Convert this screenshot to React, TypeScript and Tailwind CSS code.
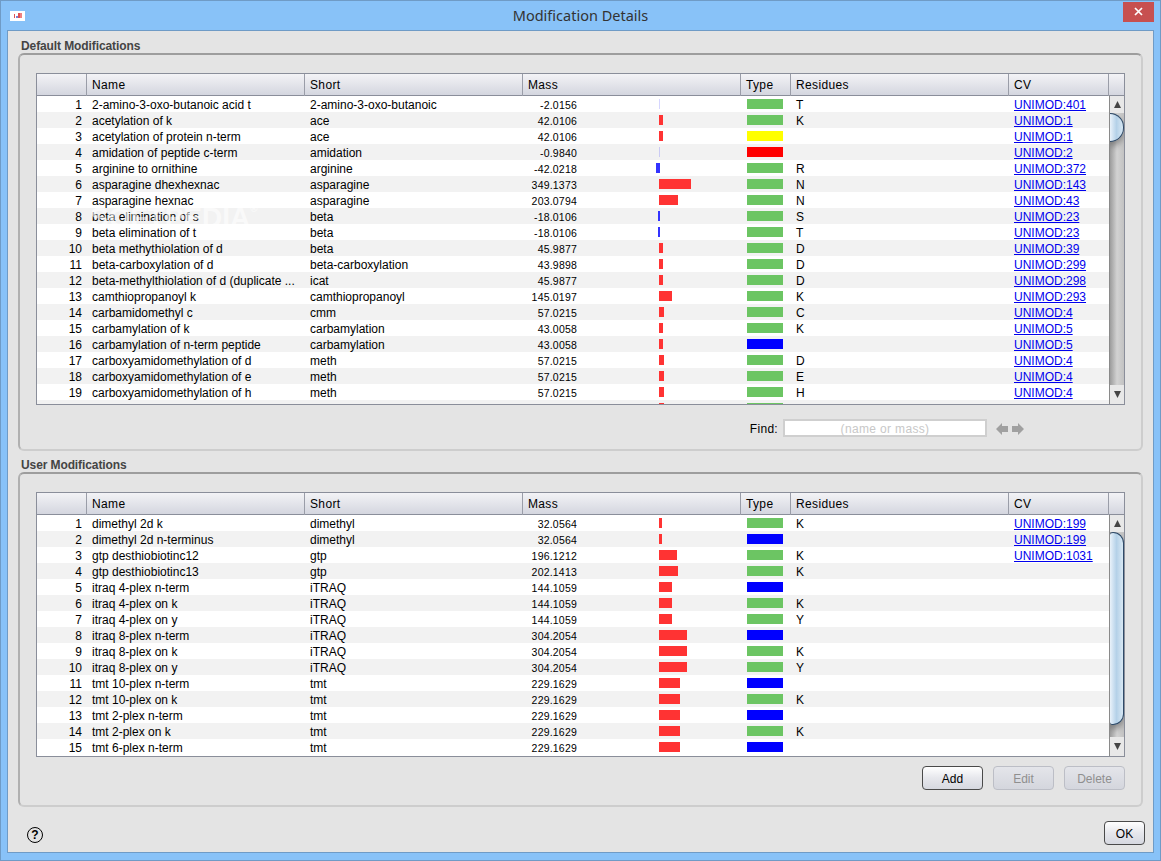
import React from "react";

type Mod = [string, string, number, string, string, string];

const G = "bg-[#6cc563]";
const Y = "bg-[#ffff00]";
const R = "bg-[#ff0000]";
const B = "bg-[#0000ff]";

const defaultMods: Mod[] = [
  ["2-amino-3-oxo-butanoic acid t", "2-amino-3-oxo-butanoic", -2.0156, G, "T", "UNIMOD:401"],
  ["acetylation of k", "ace", 42.0106, G, "K", "UNIMOD:1"],
  ["acetylation of protein n-term", "ace", 42.0106, Y, "", "UNIMOD:1"],
  ["amidation of peptide c-term", "amidation", -0.984, R, "", "UNIMOD:2"],
  ["arginine to ornithine", "arginine", -42.0218, G, "R", "UNIMOD:372"],
  ["asparagine dhexhexnac", "asparagine", 349.1373, G, "N", "UNIMOD:143"],
  ["asparagine hexnac", "asparagine", 203.0794, G, "N", "UNIMOD:43"],
  ["beta elimination of s", "beta", -18.0106, G, "S", "UNIMOD:23"],
  ["beta elimination of t", "beta", -18.0106, G, "T", "UNIMOD:23"],
  ["beta methythiolation of d", "beta", 45.9877, G, "D", "UNIMOD:39"],
  ["beta-carboxylation of d", "beta-carboxylation", 43.9898, G, "D", "UNIMOD:299"],
  ["beta-methylthiolation of d (duplicate ...", "icat", 45.9877, G, "D", "UNIMOD:298"],
  ["camthiopropanoyl k", "camthiopropanoyl", 145.0197, G, "K", "UNIMOD:293"],
  ["carbamidomethyl c", "cmm", 57.0215, G, "C", "UNIMOD:4"],
  ["carbamylation of k", "carbamylation", 43.0058, G, "K", "UNIMOD:5"],
  ["carbamylation of n-term peptide", "carbamylation", 43.0058, B, "", "UNIMOD:5"],
  ["carboxyamidomethylation of d", "meth", 57.0215, G, "D", "UNIMOD:4"],
  ["carboxyamidomethylation of e", "meth", 57.0215, G, "E", "UNIMOD:4"],
  ["carboxyamidomethylation of h", "meth", 57.0215, G, "H", "UNIMOD:4"],
  // only the top sliver of this row shows, so just its bars
  ["", "", 57.0215, G, "", ""],
];

const userMods: Mod[] = [
  ["dimethyl 2d k", "dimethyl", 32.0564, G, "K", "UNIMOD:199"],
  ["dimethyl 2d n-terminus", "dimethyl", 32.0564, B, "", "UNIMOD:199"],
  ["gtp desthiobiotinc12", "gtp", 196.1212, G, "K", "UNIMOD:1031"],
  ["gtp desthiobiotinc13", "gtp", 202.1413, G, "K", ""],
  ["itraq 4-plex n-term", "iTRAQ", 144.1059, B, "", ""],
  ["itraq 4-plex on k", "iTRAQ", 144.1059, G, "K", ""],
  ["itraq 4-plex on y", "iTRAQ", 144.1059, G, "Y", ""],
  ["itraq 8-plex n-term", "iTRAQ", 304.2054, B, "", ""],
  ["itraq 8-plex on k", "iTRAQ", 304.2054, G, "K", ""],
  ["itraq 8-plex on y", "iTRAQ", 304.2054, G, "Y", ""],
  ["tmt 10-plex n-term", "tmt", 229.1629, B, "", ""],
  ["tmt 10-plex on k", "tmt", 229.1629, G, "K", ""],
  ["tmt 2-plex n-term", "tmt", 229.1629, B, "", ""],
  ["tmt 2-plex on k", "tmt", 229.1629, G, "K", ""],
  ["tmt 6-plex n-term", "tmt", 229.1629, B, "", ""],
];

const columns = "grid grid-cols-[50px_218px_218px_218px_50px_218px_100px]";

function Header() {
  const cell = "border-r border-[#9a9da8] pl-[5px] tracking-[0.35px]";
  return (
    <div className="flex h-[22px] border-b border-[#8a8e9a] bg-gradient-to-b from-[#f3f3f6] to-[#d4d6df] text-[12px] leading-[23px] text-black">
      <div className={columns}>
        <div className={cell}></div>
        <div className={cell}>Name</div>
        <div className={cell}>Short</div>
        <div className={cell}>Mass</div>
        <div className={cell}>Type</div>
        <div className={cell}>Residues</div>
        <div className={cell}>CV</div>
      </div>
      <div className="flex-1"></div>
    </div>
  );
}

function MassBar({ mass }: { mass: number }) {
  const w = Math.abs(mass) * 0.0917;
  const style = { width: Math.max(w, 1), opacity: w < 1 ? 0.2 : 1 };
  return (
    <div className="flex h-4 items-start pt-[3px]">
      <div className="flex w-[82px] justify-end">
        {mass < 0 && <div className="mr-[-1px] h-[10px] bg-[#3333ff]" style={style} />}
      </div>
      {mass >= 0 && <div className="h-[10px] bg-[#ff3333]" style={style} />}
    </div>
  );
}

function Row({ mod, index }: { mod: Mod; index: number }) {
  const [name, short, mass, type, residue, cv] = mod;
  return (
    <div className={`${columns} h-4 text-[12px] leading-[18px] text-black ${index % 2 === 0 ? "bg-white" : "bg-[#f2f2f2]"}`}>
      <div className="pr-[5px] text-right">{name && index + 1}</div>
      <div className="pl-[5px] whitespace-nowrap">{name}</div>
      <div className="pl-[5px] whitespace-nowrap">{short}</div>
      <div className="flex">
        <div className="w-[54px] text-right text-[10.5px] tracking-[0.2px]">{name && mass.toFixed(4)}</div>
        <MassBar mass={mass} />
      </div>
      <div className="pt-[3px] pl-[6px]">
        <div className={`h-[10px] w-9 ${type}`}></div>
      </div>
      <div className="pl-[5px]">{residue}</div>
      <div className="pl-[5px]">
        {cv && <span className="text-[#0000ee] underline">{cv}</span>}
      </div>
    </div>
  );
}

function Arrow({ down }: { down?: boolean }) {
  return (
    <svg width="9" height="9" viewBox="0 0 9 9">
      <path d={down ? "M1 1h7L4.500 8z" : "M4.500 1L8 8H1z"} fill="#444" />
    </svg>
  );
}

function Scrollbar({ thumbClass }: { thumbClass: string }) {
  return (
    <div className="flex w-[15px] flex-col border-l border-[#8a8a8a]">
      <div className="flex h-[17px] shrink-0 items-center justify-center bg-[#e8e8e8]">
        <Arrow />
      </div>
      <div className="min-h-0 flex-1 overflow-hidden bg-gradient-to-r from-[#9c9c9c] via-[#d2d2d2] to-[#c2c2c2]">
        <div className={`border-y border-r border-[#2e4a68] bg-gradient-to-r from-[#e9f2fa] via-[#b4d1e8] to-[#d8e8f4] shadow-[0_4px_6px_rgba(0,0,0,0.35)] ${thumbClass}`}></div>
      </div>
      <div className="flex h-[19px] shrink-0 items-center justify-center bg-[#e8e8e8]">
        <Arrow down />
      </div>
    </div>
  );
}

function ModTable({ mods, bodyHeight, thumbClass }: { mods: Mod[]; bodyHeight: string; thumbClass: string }) {
  return (
    <div className="border border-[#8a8e9a] bg-white">
      <Header />
      <div className={`flex ${bodyHeight}`}>
        <div className="w-[1072px] overflow-hidden">
          {mods.map((mod, i) => (
            <Row key={i} mod={mod} index={i} />
          ))}
        </div>
        <Scrollbar thumbClass={thumbClass} />
      </div>
    </div>
  );
}

function Panel({ title, className, children }: { title: string; className: string; children: React.ReactNode }) {
  return (
    <section>
      <h2 className="h-[15px] pl-[3px] text-[12px] leading-[17px] font-bold tracking-[-0.1px] text-[#444444]">{title}</h2>
      <div className={`rounded-[6px] border-t-2 border-r-2 border-b-2 border-l-2 border-t-[#9d9d9d] border-r-[#cdcdcd] border-b-[#cdcdcd] border-l-[#b0b0b0] px-[16px] pt-[18px] ${className}`}>
        {children}
      </div>
    </section>
  );
}

function Button({ label, disabled }: { label: string; disabled?: boolean }) {
  return (
    <button
      className={`h-6 w-[61px] rounded-[4px] border bg-gradient-to-b pt-[2px] text-[12px] ${
        disabled
          ? "border-[#bcbec6] from-[#e4e5ea] to-[#d4d6dd] text-[#8f8f8f]"
          : "border-[#4a4a4a] from-[#ffffff] via-[#e6e7ec] to-[#d6d8e0] text-black"
      }`}
    >
      {label}
    </button>
  );
}

export default function App() {
  return (
    <div className="flex h-[861px] w-[1161px] flex-col overflow-hidden border border-[#6f9bc6] bg-[#88c2f8] font-['Liberation_Sans',Arial,sans-serif]">
      {/* title bar */}
      <div className="flex h-[29px] shrink-0 items-center pr-[6px] pl-[9px]">
        <svg width="15" height="10" viewBox="0 0 15 10" className="mt-[1px]">
          <rect width="15" height="10" fill="#fff" />
          <rect x="4" y="3" width="1" height="4" fill="#e05050" />
          <rect x="6" y="5" width="2" height="2" fill="#8080d0" />
          <rect x="8" y="2" width="2" height="5" fill="#e05050" />
          <rect x="10" y="2" width="2" height="5" fill="#f08080" />
        </svg>
        <div className="flex-1 pl-[13px] text-center font-['Noto_Sans',sans-serif] text-[14.5px] text-[#333333]">Modification Details</div>
        <div className="flex h-5 w-[31px] -translate-y-[4px] items-center justify-center bg-[#c75050]">
          <svg width="9" height="9" viewBox="0 0 9 9">
            <path d="M1 1l7 7M8 1l-7 7" stroke="#fff" strokeWidth="1.700" />
          </svg>
        </div>
      </div>

      {/* dialog content */}
      <div className="relative mx-[6px] flex h-[823px] flex-col border border-[#6f9bc6] bg-[#e4e4e4] px-[10px] pt-[7px]">
        <Panel title="Default Modifications" className="h-[398px]">
          <ModTable mods={defaultMods} bodyHeight="h-[308px]" thumbClass="h-[29px] rounded-r-[14px]" />
          <div className="flex items-start justify-end pt-[14px] pr-[101px]">
            <span className="mr-[5px] text-[12px] leading-[20px] tracking-[0.3px] text-black">Find:</span>
            <div className="h-[18px] w-[204px] border-2 border-[#cfcfcf] bg-white text-center text-[12px] leading-[16px] tracking-[0.35px] text-[#c8c8c8]">
              (name or mass)
            </div>
            <svg width="28" height="12" viewBox="0 0 28 12" className="mt-[4px] ml-[9px]">
              <path d="M0 6l6-6v3h6v6H6v3zM28 6l-6-6v3h-6v6h6v3z" fill="#a0a0a0" />
            </svg>
          </div>
        </Panel>

        <div className="mt-[6px]">
          <Panel title="User Modifications" className="h-[335px]">
            <ModTable mods={userMods} bodyHeight="h-[241px]" thumbClass="h-[193px] rounded-[4px] rounded-tr-[14px] rounded-br-[14px]" />
            <div className="flex justify-end gap-[10px] pt-[9px]">
              <Button label="Add" />
              <Button label="Edit" disabled />
              <Button label="Delete" disabled />
            </div>
          </Panel>
        </div>

        <div className="flex items-center justify-between pt-[14px] pl-[9px]">
          <div className="mt-[4px] flex h-4 w-4 items-center justify-center rounded-full border border-black text-[12px] font-bold text-black">?</div>
          <button className="mr-[-2px] h-6 w-[41px] rounded-[4px] border border-[#4a4a4a] bg-gradient-to-b from-[#ffffff] via-[#e6e7ec] to-[#d6d8e0] pt-[2px] text-[12px] text-black">
            OK
          </button>
        </div>

        {/* watermark lying over the first table */}
        <div className="pointer-events-none absolute top-[173px] left-[82px] text-[28px] leading-none font-bold text-white/60">
          SOFTPEDIA<span className="align-top text-[10px]">®</span>
        </div>
      </div>
    </div>
  );
}
